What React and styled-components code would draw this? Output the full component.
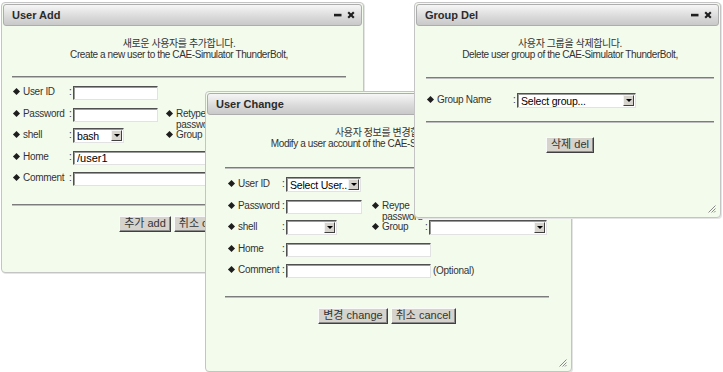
import styled, { createGlobalStyle } from 'styled-components';

const GlobalStyle = createGlobalStyle`
  html, body {
    margin: 0;
    padding: 0;
    background: #fff;
  }
  body {
    font-family: "Liberation Sans", "Noto Sans CJK KR", Arial, sans-serif;
  }
`;

const Desktop = styled.div`
  position: relative;
  width: 723px;
  height: 372px;
  overflow: hidden;
  background: #fff;
`;

const Window = styled.section`
  position: absolute;
  left: ${(p) => p.$x}px;
  top: ${(p) => p.$y}px;
  width: ${(p) => p.$w}px;
  height: ${(p) => p.$h}px;
  z-index: ${(p) => p.$z};
  box-sizing: border-box;
  display: flex;
  flex-direction: column;
  padding: 1px;
  background: #f3fbed;
  border: 1px solid #c4c4c4;
  border-radius: 4px;
  box-shadow: 1px 1px 0 #e4e4e4;
`;

const TitleBar = styled.header`
  flex: none;
  height: 22px;
  box-sizing: border-box;
  display: flex;
  align-items: center;
  justify-content: space-between;
  padding: 0 6px 0 8px;
  border: 1px solid #adadad;
  border-radius: 3px;
  background: linear-gradient(#f6f6f6, #d9d9d9 60%, #c9c9c9);
`;

const Title = styled.h2`
  margin: 0;
  font-size: 11px;
  font-weight: bold;
  color: #2b2b2b;
`;

const Body = styled.div`
  position: relative;
  flex: 1;
`;

const Content = styled.div`
  margin-left: ${(p) => p.$ml}px;
  width: ${(p) => p.$w}px;
  display: flex;
  flex-direction: column;
`;

const Intro = styled.p`
  margin: 0 0 ${(p) => p.$mb}px;
  padding-top: 12px;
  text-align: center;
  font-size: 10px;
  line-height: 11px;
  letter-spacing: -0.4px;
  color: #333;
`;

const Rule = styled.hr`
  margin: ${(p) => p.$mt || 0}px 0 0;
  height: 0;
  border: 0;
  border-top: 1px solid #7c7c7c;
  border-bottom: 1px solid #bdbdbd;
`;

const Form = styled.div`
  display: grid;
  grid-template-columns: ${(p) => p.$col}px auto;
  grid-auto-rows: 21.5px;
  padding: ${(p) => p.$pt}px 0 0 ${(p) => p.$pl}px;
`;

const Field = styled.div`
  display: flex;
  align-items: flex-start;
  padding-top: 3px;
  grid-column: ${(p) => (p.$wide ? '1 / -1' : 'auto')};
`;

const Label = styled.span`
  flex: none;
  width: ${(p) => p.$w}px;
  display: flex;
  align-items: flex-start;
  font-size: 10px;
  line-height: 11px;
  letter-spacing: -0.3px;
  color: #333;

  &::before {
    content: '';
    flex: none;
    width: 5px;
    height: 5px;
    margin: 3px 4px 0 1px;
    background: #1e1e1e;
    transform: rotate(45deg);
  }
`;

const LabelText = styled.span`
  width: ${(p) => p.$w - 12}px;
`;

const Colon = styled.span`
  flex: none;
  width: 4px;
  font-size: 10px;
  line-height: 11px;
  color: #333;
`;

const inset = `
  box-sizing: border-box;
  background: #fff;
  border: 1px solid #e2e2e2;
  border-top-color: #505050;
  border-left-color: #505050;
  box-shadow: inset 1px 1px 0 #9a9a9a;
`;

const TextBox = styled.input`
  ${inset}
  width: ${(p) => p.$w}px;
  height: 14px;
  margin: 0;
  padding: 0 3px;
  font-family: inherit;
  font-size: 11px;
  color: #000;
  outline: none;
`;

const SelectBox = styled.div`
  ${inset}
  width: ${(p) => p.$w}px;
  height: 15px;
  display: flex;
  align-items: center;
  padding: 1px 1px 1px 3px;
  margin-top: -1px;
`;

const SelectValue = styled.span`
  flex: 1;
  min-width: 0;
  font-size: 10.5px;
  line-height: 12px;
  letter-spacing: -0.2px;
  color: #000;
  white-space: nowrap;
  overflow: hidden;
`;

const ArrowButton = styled.span`
  flex: none;
  width: 11px;
  height: 11px;
  box-sizing: border-box;
  display: flex;
  align-items: center;
  justify-content: center;
  background: #d6d3cc;
  border: 1px solid;
  border-color: #f4f4f4 #404040 #404040 #f4f4f4;

  &::after {
    content: '';
    border-left: 3px solid transparent;
    border-right: 3px solid transparent;
    border-top: 3px solid #000;
  }
`;

const Note = styled.span`
  margin-left: 2px;
  font-size: 10px;
  line-height: 14px;
  letter-spacing: -0.3px;
  color: #333;
`;

const Buttons = styled.div`
  display: flex;
  justify-content: center;
  gap: 3px;
  padding-top: ${(p) => p.$pt}px;
`;

const Button = styled.button`
  height: 16px;
  margin: 0;
  padding: 0 4px;
  font-family: inherit;
  font-size: 11px;
  line-height: 13px;
  color: #333;
  background: #d6d3cc;
  border: 1px solid;
  border-color: #fafafa #404040 #404040 #fafafa;
  box-shadow: inset -1px -1px 0 #8a8a8a;
`;

const Grip = styled.svg`
  position: absolute;
  right: 3px;
  bottom: 3px;
`;

const TitleIcons = () => (
  <svg width="21" height="8" viewBox="0 0 21 8">
    <rect x="0" y="2.8" width="7.5" height="2.6" fill="#1e1e1e" />
    <path d="M14.2 1.2 L19.8 6.8 M19.8 1.2 L14.2 6.8" stroke="#1e1e1e" strokeWidth="2.1" />
  </svg>
);

const ResizeGrip = () => (
  <Grip width="9" height="9" viewBox="0 0 9 9">
    <path d="M8.5 1.5 L1.5 8.5 M8.5 4.5 L4.5 8.5 M8.5 7 L7 8.5" stroke="#8a8a8a" strokeWidth="1" />
  </Grip>
);

const Row = ({ label, lw, wide, children }) => (
  <Field $wide={wide}>
    <Label $w={lw}>
      <LabelText $w={lw}>{label}</LabelText>
    </Label>
    <Colon>:</Colon>
    {children}
  </Field>
);

const Select = ({ w, value }) => (
  <SelectBox $w={w}>
    <SelectValue>{value}</SelectValue>
    <ArrowButton />
  </SelectBox>
);

const Win = ({ title, x, y, w, h, z, children }) => (
  <Window $x={x} $y={y} $w={w} $h={h} $z={z}>
    <TitleBar>
      <Title>{title}</Title>
      <TitleIcons />
    </TitleBar>
    <Body>
      {children}
      <ResizeGrip />
    </Body>
  </Window>
);

export default function App() {
  return (
    <>
      <GlobalStyle />
      <Desktop>
        <Win title="User Add" x={1} y={2} w={363} h={271} z={1}>
          <Content $ml={9} $w={334}>
            <Intro $mb={16}>
              새로운 사용자를 추가합니다.
              <br />
              Create a new user to the CAE-Simulator ThunderBolt,
            </Intro>
            <Rule />
            <Form $col={153} $pt={5} $pl={1}>
              <Row label="User ID" lw={56}>
                <TextBox $w={85} />
              </Row>
              <div />
              <Row label="Password" lw={56}>
                <TextBox $w={85} type="password" />
              </Row>
              <Row label="Retype password" lw={53}>
                <TextBox $w={85} type="password" />
              </Row>
              <Row label="shell" lw={56}>
                <Select w={51} value="bash" />
              </Row>
              <Row label="Group" lw={53}>
                <Select w={118} value="" />
              </Row>
              <Row label="Home" lw={56} wide>
                <TextBox $w={145} defaultValue="/user1" />
              </Row>
              <Row label="Comment" lw={56} wide>
                <TextBox $w={145} />
                <Note>(Optional)</Note>
              </Row>
            </Form>
            <Rule $mt={13} />
            <Buttons $pt={10}>
              <Button>추가 add</Button>
              <Button>취소 cancel</Button>
            </Buttons>
          </Content>
        </Win>

        <Win title="User Change" x={205} y={91} w={367} h={281} z={2}>
          <Content $ml={18} $w={324}>
            <Intro $mb={18}>
              사용자 정보를 변경합니다.
              <br />
              Modify a user account of the CAE-Simulator ThunderBolt,
            </Intro>
            <Rule />
            <Form $col={144} $pt={6} $pl={3}>
              <Row label="User ID" lw={54}>
                <Select w={75} value="Select User.." />
              </Row>
              <div />
              <Row label="Password" lw={54}>
                <TextBox $w={76} type="password" />
              </Row>
              <Row label="Reype password" lw={53}>
                <TextBox $w={118} type="password" />
              </Row>
              <Row label="shell" lw={54}>
                <Select w={51} value="" />
              </Row>
              <Row label="Group" lw={53}>
                <Select w={118} value="" />
              </Row>
              <Row label="Home" lw={54} wide>
                <TextBox $w={145} />
              </Row>
              <Row label="Comment" lw={54} wide>
                <TextBox $w={145} />
                <Note>(Optional)</Note>
              </Row>
            </Form>
            <Rule $mt={13} />
            <Buttons $pt={10}>
              <Button>변경 change</Button>
              <Button>취소 cancel</Button>
            </Buttons>
          </Content>
        </Win>

        <Win title="Group Del" x={414} y={2} w={307} h={216} z={3}>
          <Content $ml={10} $w={288}>
            <Intro $mb={17}>
              사용자 그룹을 삭제합니다.
              <br />
              Delete user group of the CAE-Simulator ThunderBolt,
            </Intro>
            <Rule />
            <Form $col={288} $pt={12} $pl={1}>
              <Row label="Group Name" lw={86}>
                <Select w={119} value="Select group..." />
              </Row>
            </Form>
            <Rule $mt={8} />
            <Buttons $pt={14}>
              <Button>삭제 del</Button>
            </Buttons>
          </Content>
        </Win>
      </Desktop>
    </>
  );
}
